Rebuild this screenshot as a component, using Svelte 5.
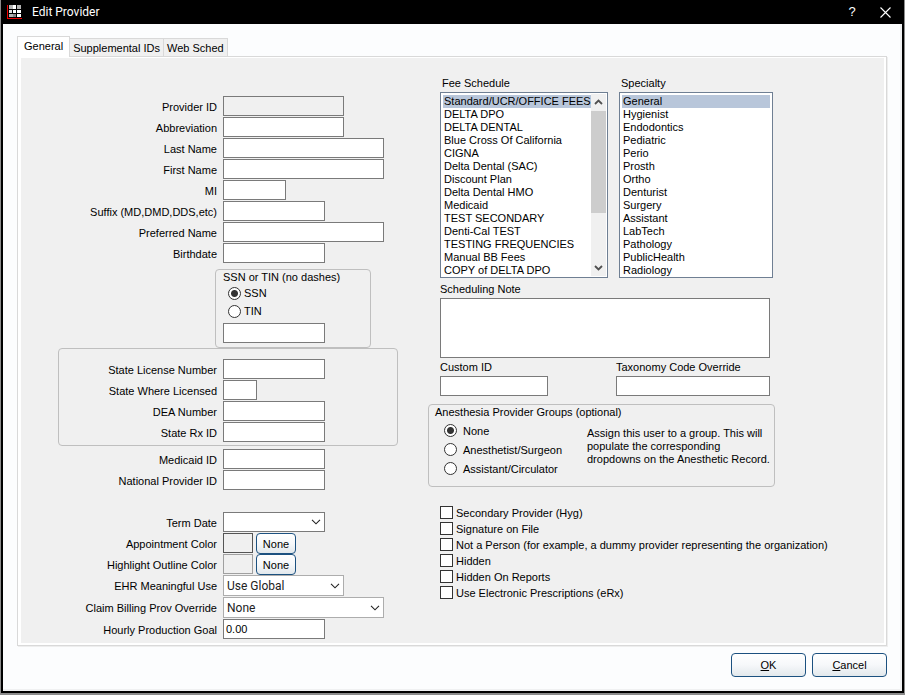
<script lang="ts">
  type Field = { id: string; label: string; size: string; readonly?: boolean }

  const tabs = ['General', 'Supplemental IDs', 'Web Sched']
  let activeTab = $state('General')

  const nameFields: Field[] = [
    { id: 'provider-id', label: 'Provider ID', size: 'medium', readonly: true },
    { id: 'abbreviation', label: 'Abbreviation', size: 'medium' },
    { id: 'last-name', label: 'Last Name', size: 'large' },
    { id: 'first-name', label: 'First Name', size: 'large' },
    { id: 'mi', label: 'MI', size: 'small' },
    { id: 'suffix', label: 'Suffix (MD,DMD,DDS,etc)', size: 'normal' },
    { id: 'preferred-name', label: 'Preferred Name', size: 'large' },
    { id: 'birthdate', label: 'Birthdate', size: 'normal' },
  ]

  const licenseFields: Field[] = [
    { id: 'state-license', label: 'State License Number', size: 'normal' },
    { id: 'state-where', label: 'State Where Licensed', size: 'tiny' },
    { id: 'dea', label: 'DEA Number', size: 'normal' },
    { id: 'state-rx', label: 'State Rx ID', size: 'normal' },
  ]

  const idFields: Field[] = [
    { id: 'medicaid', label: 'Medicaid ID', size: 'normal' },
    { id: 'npi', label: 'National Provider ID', size: 'normal' },
  ]

  const feeSchedules = [
    'Standard/UCR/OFFICE FEES', 'DELTA DPO', 'DELTA DENTAL', 'Blue Cross Of California',
    'CIGNA', 'Delta Dental (SAC)', 'Discount Plan', 'Delta Dental HMO', 'Medicaid',
    'TEST SECONDARY', 'Denti-Cal TEST', 'TESTING FREQUENCIES', 'Manual BB Fees',
    'COPY of DELTA DPO',
  ]

  const specialties = [
    'General', 'Hygienist', 'Endodontics', 'Pediatric', 'Perio', 'Prosth', 'Ortho',
    'Denturist', 'Surgery', 'Assistant', 'LabTech', 'Pathology', 'PublicHealth', 'Radiology',
  ]

  const anesthesiaGroups = ['None', 'Anesthetist/Surgeon', 'Assistant/Circulator']

  const flags = [
    'Secondary Provider (Hyg)',
    'Signature on File',
    'Not a Person (for example, a dummy provider representing the organization)',
    'Hidden',
    'Hidden On Reports',
    'Use Electronic Prescriptions (eRx)',
  ]

  let taxIdType = $state('SSN')
  let anesthesiaGroup = $state('None')
  let feeSchedule = $state('Standard/UCR/OFFICE FEES')
  let specialty = $state('General')
  let hourlyGoal = $state('0.00')
</script>

{#snippet fieldRow(field: Field)}
  <div class="row">
    <label for={field.id}>{field.label}</label>
    <input id={field.id} class="box {field.size}" type="text" readonly={field.readonly} />
  </div>
{/snippet}

{#snippet chevron()}
  <svg class="chevron" width="10" height="6" viewBox="0 0 10 6" aria-hidden="true">
    <path d="M1 .8 5 4.8 9 .8" fill="none" stroke="currentColor" stroke-width="1.1" />
  </svg>
{/snippet}

<div class="window">
  <header class="titlebar">
    <svg width="15" height="15" viewBox="0 0 15 15" shape-rendering="crispEdges" aria-hidden="true">
      <path d="M0 0h1v13h14v1H0z" fill="#f00000" />
      <path d="M2 0h4v4H2zM10 0h4v4h-4zM2 9h4v3H2z" fill="#b4b4b4" />
      <path d="M6 0h3v4H6zM6 5h3v3H6zM10 5h4v3h-4zM10 9h4v3h-4z" fill="#fff" />
      <path d="M2 5h3v3H2z" fill="#ddd" />
      <path d="M6 9h3v3H6z" fill="#888" />
    </svg>
    <h1>Edit Provider</h1>
    <button class="caption" aria-label="Help">?</button>
    <button class="caption" aria-label="Close">
      <svg width="11" height="11" viewBox="0 0 11 11" aria-hidden="true">
        <path d="M.5.5l10 10M10.5.5l-10 10" stroke="#fff" stroke-width="1.1" />
      </svg>
    </button>
  </header>

  <main>
    <div class="tabs" role="tablist">
      {#each tabs as tab (tab)}
        <button
          role="tab"
          class:active={tab === activeTab}
          aria-selected={tab === activeTab}
          onclick={() => (activeTab = tab)}>{tab}</button>
      {/each}
    </div>

    <div class="panel" role="tabpanel">
      <form id="provider" class="form">
        <div class="left">
          {#each nameFields as field (field.id)}
            {@render fieldRow(field)}
          {/each}

          <fieldset class="group tax">
            <legend>SSN or TIN (no dashes)</legend>
            {#each ['SSN', 'TIN'] as kind (kind)}
              <label class="choice">
                <input type="radio" name="tax" value={kind} bind:group={taxIdType} />
                {kind}
              </label>
            {/each}
            <input class="box normal" type="text" aria-label="SSN or TIN" />
          </fieldset>

          <div class="group license">
            {#each licenseFields as field (field.id)}
              {@render fieldRow(field)}
            {/each}
          </div>

          {#each idFields as field (field.id)}
            {@render fieldRow(field)}
          {/each}

          <div class="row term">
            <label for="term-date">Term Date</label>
            <div class="combo date normal">
              <select id="term-date"><option></option></select>
              {@render chevron()}
            </div>
          </div>
          <div class="row">
            <label for="appt-color">Appointment Color</label>
            <button type="button" id="appt-color" class="swatch dark"></button>
            <button type="button" class="push none">None</button>
          </div>
          <div class="row">
            <label for="outline-color">Highlight Outline Color</label>
            <button type="button" id="outline-color" class="swatch"></button>
            <button type="button" class="push none">None</button>
          </div>
          <div class="row">
            <label for="ehr">EHR Meaningful Use</label>
            <div class="combo medium">
              <select id="ehr"><option>Use Global</option></select>
              {@render chevron()}
            </div>
          </div>
          <div class="row">
            <label for="claim">Claim Billing Prov Override</label>
            <div class="combo large">
              <select id="claim"><option>None</option></select>
              {@render chevron()}
            </div>
          </div>
          <div class="row">
            <label for="hourly">Hourly Production Goal</label>
            <input id="hourly" class="box normal" type="text" bind:value={hourlyGoal} />
          </div>
        </div>

        <div class="right">
          <div class="lists">
            <div>
              <label for="fees">Fee Schedule</label>
              <div class="listbox">
                <select id="fees" size="14" bind:value={feeSchedule}>
                  {#each feeSchedules as fee (fee)}
                    <option value={fee}>{fee}</option>
                  {/each}
                </select>
                <div class="scrollbar" aria-hidden="true">
                  <svg width="9" height="6" viewBox="0 0 9 6">
                    <path d="M1 5 4.5 1.5 8 5" fill="none" stroke="#505050" stroke-width="1.8" />
                  </svg>
                  <div class="thumb"></div>
                  <svg width="9" height="6" viewBox="0 0 9 6">
                    <path d="M1 1 4.5 4.5 8 1" fill="none" stroke="#505050" stroke-width="1.8" />
                  </svg>
                </div>
              </div>
            </div>
            <div>
              <label for="specialty">Specialty</label>
              <div class="listbox">
                <select id="specialty" size="14" bind:value={specialty}>
                  {#each specialties as item (item)}
                    <option value={item}>{item}</option>
                  {/each}
                </select>
              </div>
            </div>
          </div>

          <div class="note">
            <label for="note">Scheduling Note</label>
            <textarea id="note"></textarea>
          </div>

          <div class="codes">
            <div>
              <label for="custom-id">Custom ID</label>
              <input id="custom-id" class="box custom" type="text" />
            </div>
            <div>
              <label for="taxonomy">Taxonomy Code Override</label>
              <input id="taxonomy" class="box taxonomy" type="text" />
            </div>
          </div>

          <fieldset class="group anesthesia">
            <legend>Anesthesia Provider Groups (optional)</legend>
            <div class="options">
              {#each anesthesiaGroups as group (group)}
                <label class="choice">
                  <input type="radio" name="anesthesia" value={group} bind:group={anesthesiaGroup} />
                  {group}
                </label>
              {/each}
            </div>
            <p>Assign this user to a group. This will populate the corresponding dropdowns on the Anesthetic Record.</p>
          </fieldset>

          <div class="flags">
            {#each flags as flag (flag)}
              <label class="check"><input type="checkbox" />{flag}</label>
            {/each}
          </div>
        </div>
      </form>
    </div>

    <footer>
      <button class="push" form="provider" type="button"><u>O</u>K</button>
      <button class="push" type="button"><u>C</u>ancel</button>
    </footer>
  </main>
</div>

<style>
  :global(body) {
    background: #8c8c8c;
  }

  .window {
    --face: #f0f0f0;
    --line: #7a7a7a;
    box-sizing: border-box;
    min-height: 100vh;
    display: flex;
    flex-direction: column;
    padding: 0 1px 2px;
    color: #000;
    font: 11px/14px "Liberation Sans", Arial, sans-serif;
  }

  .window * {
    box-sizing: border-box;
  }

  button, input, select, textarea {
    margin: 0;
    padding: 0;
    border-radius: 0;
    color: inherit;
    font: inherit;
  }

  .titlebar {
    display: flex;
    align-items: center;
    height: 24px;
    padding: 0 6px;
    background: #000;
    color: #fff;
  }

  h1 {
    flex: 1;
    margin: 0 0 0 10px;
    font: 12px/14px Roboto, sans-serif;
  }

  .caption {
    display: grid;
    place-items: center;
    width: 26px;
    height: 22px;
    margin-left: 7px;
    border: 0;
    background: none;
    font-size: 13px;
  }

  main {
    flex: 1;
    padding: 12px 15px 13px 14px;
    border: solid #000;
    border-width: 0 2px 2px;
    background: #fcfdfe;
    box-shadow: inset -2px -2px #f0f1f2;
  }

  .tabs {
    position: relative;
    display: flex;
    align-items: flex-end;
    height: 20px;
  }

  .tabs button {
    height: 18px;
    padding: 0 3px;
    border: solid #d9d9d9;
    border-width: 1px 1px 0 0;
    background: var(--face);
  }

  .tabs .active {
    height: 21px;
    margin-bottom: -1px;
    padding: 0 6px 2px;
    border-left-width: 1px;
    background: #fff;
  }

  .panel {
    padding: 1px 2px 2px 3px;
    border: 1px solid #d9d9d9;
    background: #fff;
    box-shadow: 1px 1px #eee;
  }

  .form {
    display: grid;
    grid-template-columns: 407px 1fr;
    background: var(--face);
  }

  .left {
    --label: 159px;
    padding: 38px 0 3px 37px;
  }

  .row {
    display: flex;
    align-items: flex-start;
    margin-bottom: 1px;
  }

  .row label {
    flex: none;
    width: var(--label);
    height: 20px;
    margin-right: 6px;
    line-height: 22px;
    text-align: right;
    white-space: nowrap;
  }

  .box {
    display: block;
    height: 20px;
    padding: 0 2px;
    border: 1px solid var(--line);
    background: #fff;
    outline: none;
  }

  .box:read-only {
    background: var(--face);
  }

  .tiny { width: 34px; }
  .small { width: 63px; }
  .normal { width: 102px; }
  .custom { width: 108px; }
  .medium { width: 121px; }
  .taxonomy { width: 154px; }
  .large { width: 161px; }

  .group {
    margin: 0;
    border: 1px solid #bfbfbf;
    border-radius: 4px;
  }

  legend {
    float: left;
    width: 100%;
    padding: 0;
  }

  .tax {
    width: 156px;
    margin: 6px 0 0 157px;
    padding: 0 6px 4px 7px;
  }

  .tax .choice {
    height: 18px;
    clear: both;
    padding-left: 5px;
  }

  .tax .box {
    margin-top: 3px;
  }

  .choice {
    display: flex;
    align-items: center;
    gap: 3px;
  }

  input[type='radio'] {
    appearance: none;
    flex: none;
    width: 13px;
    height: 13px;
    border: 1px solid #333;
    border-radius: 50%;
    background: #fff;
  }

  input[type='radio']:checked {
    background: radial-gradient(circle, #333 3px, #fff 4px);
  }

  .license {
    --label: 158px;
    width: 340px;
    margin-bottom: 3px;
    padding: 10px 0 2px;
  }

  .term {
    margin-top: 22px;
  }

  .combo {
    display: grid;
    align-items: center;
    height: 21px;
    border: 1px solid #adadad;
    background: #fff;
    color: #222;
    font-family: Roboto, sans-serif;
    font-size: 12px;
  }

  .combo.date {
    height: 20px;
    border-color: var(--line);
  }

  .combo select {
    grid-area: 1 / 1;
    appearance: none;
    width: 100%;
    height: 100%;
    padding: 1px 0 0 3px;
    border: 0;
    background: none;
  }

  .chevron {
    grid-area: 1 / 1;
    justify-self: end;
    margin-right: 3px;
    pointer-events: none;
  }

  .swatch {
    width: 30px;
    height: 20px;
    margin-right: 3px;
    border: 1px solid #a0a0a0;
    background: var(--face);
  }

  .swatch.dark {
    border-color: #555;
  }

  .push {
    width: 75px;
    height: 24px;
    border: 1px solid #1c5180;
    border-radius: 4px;
    background: linear-gradient(#fff, #f6f8fa 50%, #e2e8ec);
  }

  .push.none {
    width: 40px;
    height: 21px;
    margin-bottom: -1px;
  }

  .right {
    padding: 18px 0 0;
  }

  .right label {
    display: block;
  }

  .lists,
  .note,
  .codes,
  .flags {
    margin-left: 12px;
  }

  .lists label {
    padding-left: 2px;
  }

  .lists {
    display: grid;
    grid-template-columns: 168px 154px;
    gap: 11px;
    margin-bottom: 4px;
  }

  .listbox {
    display: flex;
    height: 186px;
    margin-top: 2px;
    padding: 2px;
    border: 1px solid #6f7f93;
    background: #fff;
  }

  .listbox select {
    flex: 1;
    min-width: 0;
    height: 182px;
    border: 0;
    background: none;
    outline: none;
    overflow: hidden;
  }

  .listbox option {
    height: 13px;
    min-height: 13px;
    padding: 0 1px;
    line-height: 13px;
  }

  .listbox option:checked {
    background: #b8c6da linear-gradient(#b8c6da, #b8c6da);
    color: #000;
  }

  .scrollbar {
    display: flex;
    flex-direction: column;
    align-items: center;
    width: 15px;
    margin: -1px -1px -1px 0;
    padding: 5px 0;
    background: var(--face);
  }

  .thumb {
    width: 100%;
    height: 102px;
    margin: 6px 0 auto;
    background: #cdcdcd;
  }

  textarea {
    display: block;
    width: 330px;
    height: 60px;
    margin-top: 2px;
    border: 1px solid var(--line);
    background: #fff;
    resize: none;
  }

  .codes {
    display: grid;
    grid-template-columns: 176px 154px;
    margin-top: 2px;
  }

  .codes .box {
    margin-top: 2px;
  }

  .anesthesia {
    display: grid;
    grid-template-columns: 143px 185px;
    width: 347px;
    margin-top: 8px;
    padding: 0 0 8px 15px;
  }

  .anesthesia legend {
    grid-column: 1 / -1;
    margin-left: -9px;
  }

  .options {
    margin-top: 2px;
  }

  .anesthesia .choice {
    display: flex;
    gap: 6px;
    height: 19px;
  }

  .anesthesia p {
    margin: 8px 0 0;
    line-height: 13px;
  }

  .flags {
    margin-top: 18px;
  }

  .right .check {
    display: flex;
    align-items: flex-start;
    gap: 3px;
    height: 16px;
    line-height: 16px;
  }

  .check input {
    margin-top: 1px;
  }

  input[type='checkbox'] {
    appearance: none;
    width: 13px;
    height: 13px;
    border: 1px solid #333;
    background: #fff;
  }

  input[type='checkbox']:checked {
    background: #333;
    box-shadow: inset 0 0 0 2px #fff;
  }

  footer {
    display: flex;
    justify-content: flex-end;
    gap: 6px;
    margin-top: 7px;
  }
</style>
